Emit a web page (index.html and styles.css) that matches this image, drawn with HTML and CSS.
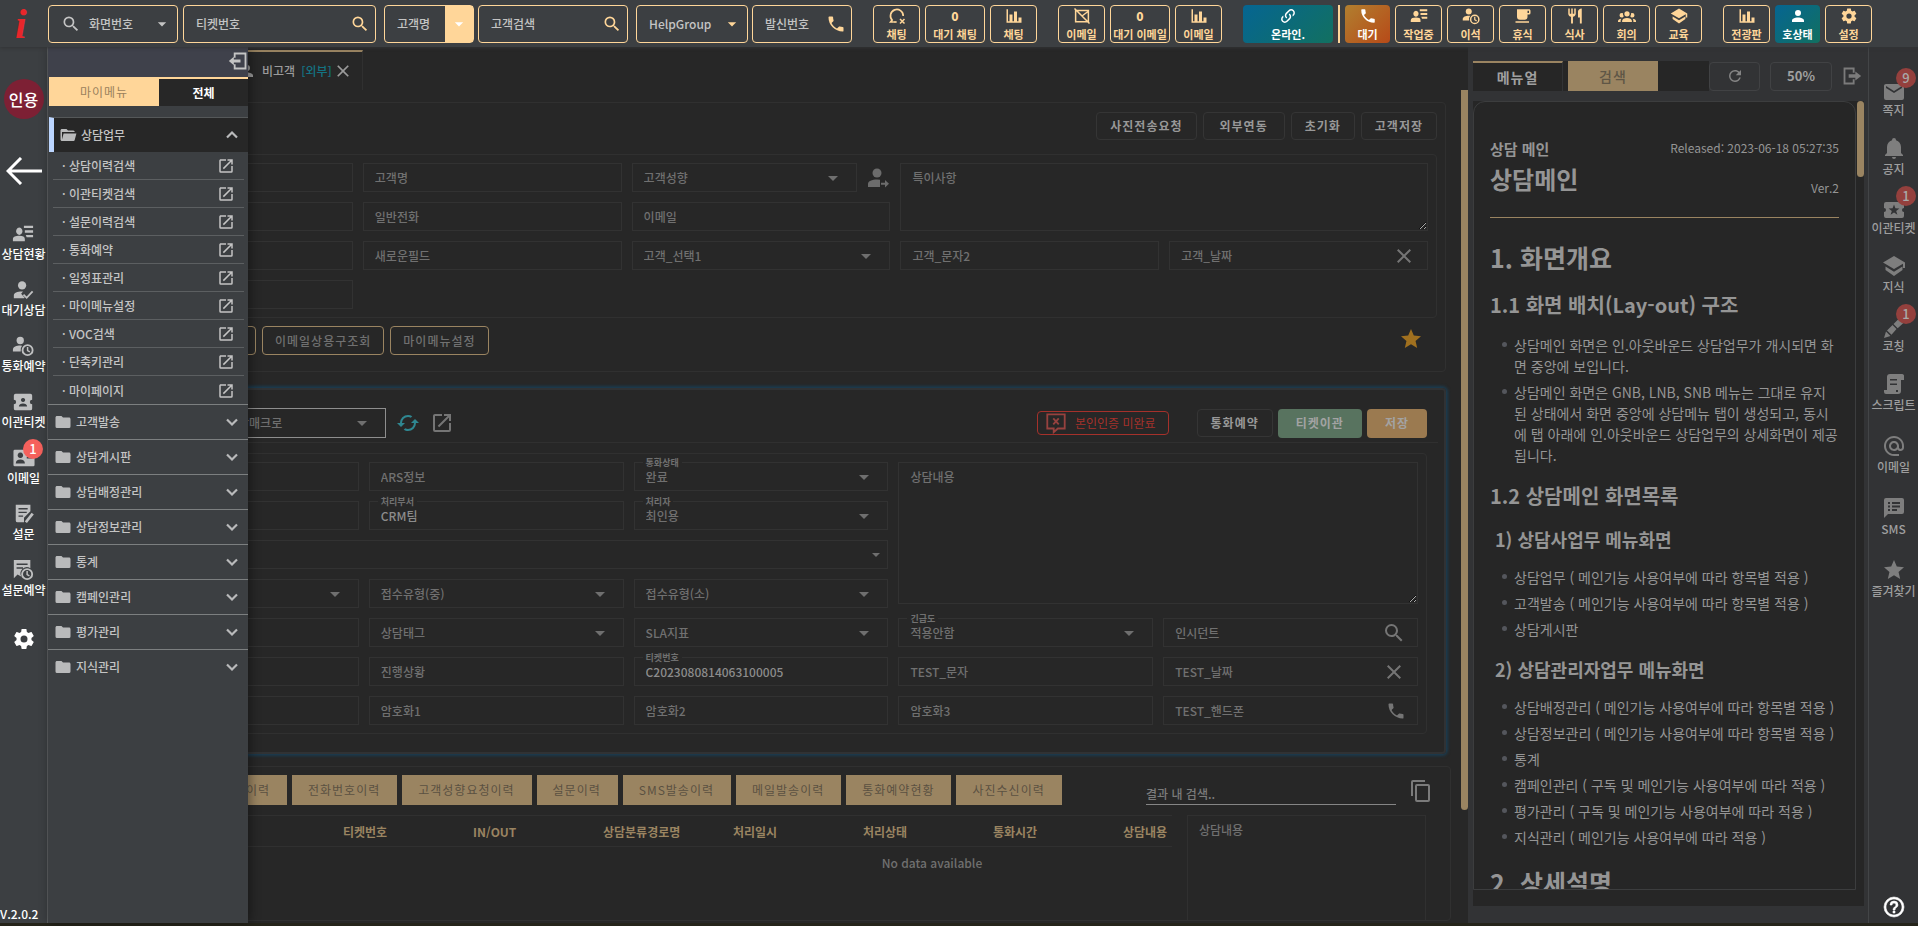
FILE: index.html
```html
<!DOCTYPE html>
<html lang="ko">
<head>
    <meta charset="UTF-8">
    <meta name="viewport" content="width=device-width, initial-scale=1.0">
    <title>상담메인</title>
    <link rel="stylesheet" href="styles.css">
</head>
<body>
    <!-- iconos -->
    <svg class="sprite" aria-hidden="true">
        <symbol id="magnify" viewBox="0 0 24 24"><path d="M9.5,3A6.5,6.5 0 0,1 16,9.5C16,11.11 15.41,12.59 14.44,13.73L14.71,14H15.5L20.5,19L19,20.5L14,15.5V14.71L13.73,14.44C12.59,15.41 11.11,16 9.5,16A6.5,6.5 0 0,1 3,9.5A6.5,6.5 0 0,1 9.5,3M9.5,5C7,5 5,7 5,9.5C5,12 7,14 9.5,14C12,14 14,12 14,9.5C14,7 12,5 9.5,5Z"/></symbol>
        <symbol id="down" viewBox="0 0 24 24"><path d="M7,10L12,15L17,10H7Z"/></symbol>
        <symbol id="phone" viewBox="0 0 24 24"><path d="M6.62,10.79C8.06,13.62 10.38,15.94 13.21,17.38L15.41,15.18C15.69,14.9 16.08,14.82 16.43,14.93C17.55,15.3 18.75,15.5 20,15.5A1,1 0 0,1 21,16.5V20A1,1 0 0,1 20,21A17,17 0 0,1 3,4A1,1 0 0,1 4,3H7.5A1,1 0 0,1 8.5,4C8.5,5.25 8.7,6.45 9.07,7.57C9.18,7.92 9.1,8.31 8.82,8.59L6.62,10.79Z"/></symbol>
        <symbol id="chart" viewBox="0 0 24 24"><path d="M22,21H2V3H4V19H6V10H10V19H12V6H16V19H18V14H22V21Z"/></symbol>
        <symbol id="chat-off" viewBox="0 0 24 24"><path d="M7,20H3.5L5.5,17.5A8.5,8.5 0 1,1 20.3,12" fill="none" stroke="currentColor" stroke-width="2.2"/><path d="M7,20H11.5" fill="none" stroke="currentColor" stroke-width="2.2"/><path d="M16,16L22,22M22,16L16,22" fill="none" stroke="currentColor" stroke-width="2"/></symbol>
        <symbol id="mail-off" viewBox="0 0 24 24"><path d="M3.5,4.5H20.5V19.5H3.5ZM12,12L20,6M2,2L22,22" fill="none" stroke="currentColor" stroke-width="2"/></symbol>
        <symbol id="link" viewBox="0 0 24 24"><path d="M10.59,13.41C11,13.8 11,14.44 10.59,14.83C10.2,15.22 9.56,15.22 9.17,14.83C7.22,12.88 7.22,9.71 9.17,7.76V7.76L12.71,4.22C14.66,2.27 17.83,2.27 19.78,4.22C21.73,6.17 21.73,9.34 19.78,11.29L18.29,12.78C18.3,11.96 18.17,11.14 17.89,10.36L18.36,9.88C19.54,8.71 19.54,6.81 18.36,5.64C17.19,4.46 15.29,4.46 14.12,5.64L10.59,9.17C9.41,10.34 9.41,12.24 10.59,13.41M13.41,9.17C13.8,8.78 14.44,8.78 14.83,9.17C16.78,11.12 16.78,14.29 14.83,16.24V16.24L11.29,19.78C9.34,21.73 6.17,21.73 4.22,19.78C2.27,17.83 2.27,14.66 4.22,12.71L5.71,11.22C5.7,12.04 5.83,12.86 6.11,13.65L5.64,14.12C4.46,15.29 4.46,17.19 5.64,18.36C6.81,19.54 8.71,19.54 9.88,18.36L13.41,14.83C14.59,13.66 14.59,11.76 13.41,10.59C13,10.2 13,9.56 13.41,9.17Z"/></symbol>
        <symbol id="user-list" viewBox="0 0 24 24"><path d="M8,5A3.5,4 0 1,1 7.9,5M1,20V17.5C1,15 4,14 8,14C12,14 14,15 14,17.5V20ZM13,3H23V5.5H13ZM14,8H23V10.5H14ZM15,13H23V15.5H16Z"/></symbol>
        <symbol id="user-clock" viewBox="0 0 24 24"><circle cx="9" cy="6" r="4"/><path d="M1,18V16C1,13 5,11.5 9,11.5L11,11.7A7,7 0 0,0 9.5,18Z"/><circle cx="17" cy="16.5" r="5.5" fill="none" stroke="currentColor" stroke-width="2"/><path d="M17,13V17L19.5,18.5" fill="none" stroke="currentColor" stroke-width="1.6"/></symbol>
        <symbol id="user-check" viewBox="0 0 24 24"><circle cx="11" cy="7" r="4.5"/><path d="M2,21V18C2,15 6,13.5 12,13.7L10,16L14,20.8L13,21Z"/><path d="M12.5,17L16,20.5L22.5,13.5" fill="none" stroke="currentColor" stroke-width="2"/></symbol>
        <symbol id="user-arrow" viewBox="0 0 24 24"><circle cx="11" cy="7" r="4.5"/><path d="M2,21V18C2,15 6,13.5 11,13.5L14,13.8V21ZM15,16.7H19V14L23,17.7L19,21.4V18.7H15Z"/></symbol>
        <symbol id="coffee" viewBox="0 0 24 24"><path d="M2,21H20V19H2M20,8H18V5H20M20,3H4V13A4,4 0 0,0 8,17H14A4,4 0 0,0 18,13V10H20A2,2 0 0,0 22,8V5C22,3.89 21.1,3 20,3Z"/></symbol>
        <symbol id="food" viewBox="0 0 24 24"><path d="M11,9H9V2H7V9H5V2H3V9C3,11.12 4.66,12.84 6.75,12.97V22H9.25V12.97C11.34,12.84 13,11.12 13,9V2H11V9M16,6V14H18.5V22H21V2C18.24,2 16,4.24 16,6Z"/></symbol>
        <symbol id="group" viewBox="0 0 24 24"><path d="M12,5.5A3.5,3.5 0 0,1 15.5,9A3.5,3.5 0 0,1 12,12.5A3.5,3.5 0 0,1 8.5,9A3.5,3.5 0 0,1 12,5.5M5,8C5.56,8 6.08,8.15 6.53,8.42C6.38,9.85 6.8,11.27 7.66,12.38C7.16,13.34 6.16,14 5,14A3,3 0 0,1 2,11A3,3 0 0,1 5,8M19,8A3,3 0 0,1 22,11A3,3 0 0,1 19,14C17.84,14 16.84,13.34 16.34,12.38C17.2,11.27 17.62,9.85 17.47,8.42C17.92,8.15 18.44,8 19,8M5.5,18.25C5.5,16.18 8.41,14.5 12,14.5C15.59,14.5 18.5,16.18 18.5,18.25V20H5.5V18.25M0,20V18.5C0,17.11 1.89,15.94 4.45,15.6C3.86,16.28 3.5,17.22 3.5,18.25V20H0M24,20H20.5V18.25C20.5,17.22 20.14,16.28 19.55,15.6C22.11,15.94 24,17.11 24,18.5V20Z"/></symbol>
        <symbol id="school" viewBox="0 0 24 24"><path d="M12,2L1,8.5L12,15L21,9.7V14H23V8.5M3.5,12.5V16L12,22L20.5,16V12.5L12,17.7Z"/></symbol>
        <symbol id="user" viewBox="0 0 24 24"><path d="M12,4A4,4 0 0,1 16,8A4,4 0 0,1 12,12A4,4 0 0,1 8,8A4,4 0 0,1 12,4M12,14C16.42,14 20,15.79 20,18V20H4V18C4,15.79 7.58,14 12,14Z"/></symbol>
        <symbol id="cog" viewBox="0 0 24 24"><path d="M12,15.5A3.5,3.5 0 0,1 8.5,12A3.5,3.5 0 0,1 12,8.5A3.5,3.5 0 0,1 15.5,12A3.5,3.5 0 0,1 12,15.5M19.43,12.97C19.47,12.65 19.5,12.33 19.5,12C19.5,11.67 19.47,11.34 19.43,11L21.54,9.37C21.73,9.22 21.78,8.95 21.66,8.73L19.66,5.27C19.54,5.05 19.27,4.96 19.05,5.05L16.56,6.05C16.04,5.66 15.5,5.32 14.87,5.07L14.5,2.42C14.46,2.18 14.25,2 14,2H10C9.75,2 9.54,2.18 9.5,2.42L9.13,5.07C8.5,5.32 7.96,5.66 7.44,6.05L4.95,5.05C4.73,4.96 4.46,5.05 4.34,5.27L2.34,8.73C2.21,8.95 2.27,9.22 2.46,9.37L4.57,11C4.53,11.34 4.5,11.67 4.5,12C4.5,12.33 4.53,12.65 4.57,12.97L2.46,14.63C2.27,14.78 2.21,15.05 2.34,15.27L4.34,18.73C4.46,18.95 4.73,19.03 4.95,18.95L7.44,17.94C7.96,18.34 8.5,18.68 9.13,18.93L9.5,21.58C9.54,21.82 9.75,22 10,22H14C14.25,22 14.46,21.82 14.5,21.58L14.87,18.93C15.5,18.67 16.04,18.34 16.56,17.94L19.05,18.95C19.27,19.03 19.54,18.95 19.66,18.73L21.66,15.27C21.78,15.05 21.73,14.78 21.54,14.63L19.43,12.97Z"/></symbol>
        <symbol id="open" viewBox="0 0 24 24"><path d="M14,3V5H17.59L7.76,14.83L9.17,16.24L19,6.41V10H21V3M19,19H5V5H12V3H5C3.89,3 3,3.9 3,5V19A2,2 0 0,0 5,21H19A2,2 0 0,0 21,19V12H19V19Z"/></symbol>
        <symbol id="chev-down" viewBox="0 0 24 24"><path d="M6,9L12,15L18,9" fill="none" stroke="currentColor" stroke-width="2.6"/></symbol>
        <symbol id="chev-up" viewBox="0 0 24 24"><path d="M6,15L12,9L18,15" fill="none" stroke="currentColor" stroke-width="2.6"/></symbol>
        <symbol id="folder" viewBox="0 0 24 24"><path d="M10,4H4C2.89,4 2,4.89 2,6V18A2,2 0 0,0 4,20H20A2,2 0 0,0 22,18V8C22,6.89 21.1,6 20,6H12L10,4Z"/></symbol>
        <symbol id="folder-open" viewBox="0 0 24 24"><path d="M19,20H4C2.89,20 2,19.1 2,18V6C2,4.89 2.89,4 4,4H10L12,6H19A2,2 0 0,1 21,8H21L4,8V18L6.14,10H23.21L20.93,18.5C20.7,19.37 19.92,20 19,20Z"/></symbol>
        <symbol id="close" viewBox="0 0 24 24"><path d="M19,6.41L17.59,5L12,10.59L6.41,5L5,6.41L10.59,12L5,17.59L6.41,19L12,13.41L17.59,19L19,17.59L13.41,12L19,6.41Z"/></symbol>
        <symbol id="star" viewBox="0 0 24 24"><path d="M12,17.27L18.18,21L16.54,13.97L22,9.24L14.81,8.62L12,2L9.19,8.62L2,9.24L7.45,13.97L5.82,21L12,17.27Z"/></symbol>
        <symbol id="cached" viewBox="0 0 24 24"><path d="M19,8L15,12H18A6,6 0 0,1 12,18C11,18 10.03,17.75 9.2,17.3L7.74,18.76C8.97,19.54 10.43,20 12,20A8,8 0 0,0 20,12H23M6,12A6,6 0 0,1 12,6C13,6 13.97,6.25 14.8,6.7L16.26,5.24C15.03,4.46 13.57,4 12,4A8,8 0 0,0 4,12H1L5,16L9,12"/></symbol>
        <symbol id="refresh" viewBox="0 0 24 24"><path d="M17.65,6.35C16.2,4.9 14.21,4 12,4A8,8 0 0,0 4,12A8,8 0 0,0 12,20C15.73,20 18.84,17.45 19.73,14H17.65C16.83,16.33 14.61,18 12,18A6,6 0 0,1 6,12A6,6 0 0,1 12,6C13.66,6 15.14,6.69 16.22,7.78L13,11H20V4L17.65,6.35Z"/></symbol>
        <symbol id="email" viewBox="0 0 24 24"><path d="M20,8L12,13L4,8V6L12,11L20,6M20,4H4C2.89,4 2,4.89 2,6V18A2,2 0 0,0 4,20H20A2,2 0 0,0 22,18V6C22,4.89 21.1,4 20,4Z"/></symbol>
        <symbol id="bell" viewBox="0 0 24 24"><path d="M21,19V20H3V19L5,17V11C5,7.9 7.03,5.17 10,4.29C10,4.19 10,4.1 10,4A2,2 0 0,1 12,2A2,2 0 0,1 14,4C14,4.1 14,4.19 14,4.29C16.97,5.17 19,7.9 19,11V17L21,19M14,21A2,2 0 0,1 12,23A2,2 0 0,1 10,21"/></symbol>
        <symbol id="ticket" viewBox="0 0 24 24"><path fill-rule="evenodd" d="M4,4H20A2,2 0 0,1 22,6V10A2,2 0 0,0 22,14V18A2,2 0 0,1 20,20H4A2,2 0 0,1 2,18V14A2,2 0 0,0 2,10V6A2,2 0 0,1 4,4M12,6.5L10.6,10.3L6.6,10.4L9.8,12.9L8.6,16.8L12,14.5L15.4,16.8L14.2,12.9L17.4,10.4L13.4,10.3Z"/></symbol>
        <symbol id="ticket-user" viewBox="0 0 24 24"><path fill-rule="evenodd" d="M4,3H20A2,2 0 0,1 22,5V9.5A2.5,2.5 0 0,0 22,14.5V19A2,2 0 0,1 20,21H4A2,2 0 0,1 2,19V14.5A2.5,2.5 0 0,0 2,9.5V5A2,2 0 0,1 4,3M12,7.5A2.3,2.3 0 1,0 12.1,7.5M7.5,17H16.5C16.5,14.5 14.5,13.5 12,13.5C9.5,13.5 7.5,14.5 7.5,17Z"/></symbol>
        <symbol id="card" viewBox="0 0 24 24"><path fill-rule="evenodd" d="M2,3H22A1.5,1.5 0 0,1 23.5,4.5V19.5A1.5,1.5 0 0,1 22,21H2A1.5,1.5 0 0,1 0.5,19.5V4.5A1.5,1.5 0 0,1 2,3M8,6A3,3 0 1,0 8.1,6M3,18H13C13,15 11,13.5 8,13.5C5,13.5 3,15 3,18ZM15,7V8.5H21V7ZM15,11V12.5H21V11Z"/></symbol>
        <symbol id="survey" viewBox="0 0 24 24"><path fill-rule="evenodd" d="M3,2H19V9L12,16V21H5A2,2 0 0,1 3,19ZM6,5.5V7H16V5.5ZM6,9.5V11H15V9.5ZM6,13.5V15H11V13.5Z"/><path d="M14,21L21.5,11.5" stroke="currentColor" stroke-width="3"/></symbol>
        <symbol id="survey-clock" viewBox="0 0 24 24"><path fill-rule="evenodd" d="M2,1H20V10A7,7 0 0,0 10,19L6,17L2,21ZM5,5V6.5H17V5ZM5,9V10.5H12V9Z"/><circle cx="16.5" cy="16.5" r="5.5" fill="none" stroke="currentColor" stroke-width="2"/><path d="M16.5,13V17L19,18.5" fill="none" stroke="currentColor" stroke-width="1.6"/></symbol>
        <symbol id="pen" viewBox="0 0 24 24"><path d="M2,22L4,15.5L8.5,20ZM5,14.5L10.5,9L14.5,13L9.5,18.8ZM11.5,8L18,1.5L22.5,6L15.7,12.2Z"/></symbol>
        <symbol id="script" viewBox="0 0 24 24"><path fill-rule="evenodd" d="M8,2H20A2.5,2.5 0 0,1 22,5V8H19V19A3,3 0 0,1 16,22H4A2,2 0 0,1 2,20V18H14V20H16V18H5V5A3,3 0 0,1 8,2M8,7V8.5H15V7ZM8,11.5V13H15V11.5Z"/></symbol>
        <symbol id="at" viewBox="0 0 24 24"><path d="M12,15C12.81,15 13.5,14.7 14.11,14.11C14.7,13.5 15,12.81 15,12C15,11.19 14.7,10.5 14.11,9.89C13.5,9.3 12.81,9 12,9C11.19,9 10.5,9.3 9.89,9.89C9.3,10.5 9,11.19 9,12C9,12.81 9.3,13.5 9.89,14.11C10.5,14.7 11.19,15 12,15M12,2C14.75,2 17.1,3 19.05,4.95C21,6.9 22,9.25 22,12V13.45C22,14.45 21.65,15.3 21,16C20.3,16.67 19.5,17 18.5,17C17.3,17 16.31,16.5 15.56,15.5C14.56,16.5 13.38,17 12,17C10.63,17 9.45,16.5 8.46,15.54C7.5,14.55 7,13.38 7,12C7,10.63 7.5,9.45 8.46,8.46C9.45,7.5 10.63,7 12,7C13.38,7 14.55,7.5 15.54,8.46C16.5,9.45 17,10.63 17,12V13.45C17,13.86 17.16,14.22 17.46,14.53C17.76,14.84 18.11,15 18.5,15C18.92,15 19.27,14.84 19.57,14.53C19.87,14.22 20,13.86 20,13.45V12C20,9.81 19.23,7.93 17.65,6.35C16.07,4.77 14.19,4 12,4C9.81,4 7.93,4.77 6.35,6.35C4.77,7.93 4,9.81 4,12C4,14.19 4.77,16.07 6.35,17.65C7.93,19.23 9.81,20 12,20H17V22H12C9.25,22 6.9,21 4.95,19.05C3,17.1 2,14.75 2,12C2,9.25 3,6.9 4.95,4.95C6.9,3 9.25,2 12,2Z"/></symbol>
        <symbol id="sms" viewBox="0 0 24 24"><path fill-rule="evenodd" d="M4,2H20A2,2 0 0,1 22,4V16A2,2 0 0,1 20,18H6L2,22V4A2,2 0 0,1 4,2M6,6V8H8V6ZM10,6V8H18V6ZM6,9.5V11.5H8V9.5ZM10,9.5V11.5H18V9.5ZM6,13V15H8V13ZM10,13V15H15V13Z"/></symbol>
        <symbol id="copy" viewBox="0 0 24 24"><path d="M19,21H8V7H19M19,5H8A2,2 0 0,0 6,7V21A2,2 0 0,0 8,23H19A2,2 0 0,0 21,21V7A2,2 0 0,0 19,5M16,1H4A2,2 0 0,0 2,3V17H4V3H16V1Z"/></symbol>
        <symbol id="help" viewBox="0 0 24 24"><path d="M11,18H13V16H11V18M12,2A10,10 0 0,0 2,12A10,10 0 0,0 12,22A10,10 0 0,0 22,12A10,10 0 0,0 12,2M12,20C7.59,20 4,16.41 4,12C4,7.59 7.59,4 12,4C16.41,4 20,7.59 20,12C20,16.41 16.41,20 12,20M12,6A4,4 0 0,0 8,10H10A2,2 0 0,1 12,8A2,2 0 0,1 14,10C14,12 11,11.75 11,15H13C13,12.75 16,12.5 16,10A4,4 0 0,0 12,6Z" stroke="currentColor" stroke-width="0.6"/></symbol>
        <symbol id="exit-left" viewBox="0 0 24 24"><path d="M8,8V3H21V21H8V16" fill="none" stroke="currentColor" stroke-width="2.2"/><path d="M1,12L7,7V10.3H15V13.7H7V17Z"/></symbol>
        <symbol id="exit-right" viewBox="0 0 24 24"><path d="M14,8V3H3V21H14V16" fill="none" stroke="currentColor" stroke-width="2.2"/><path d="M23,12L16,6.5V10H8V14H16V17.5Z"/></symbol>
        <symbol id="no-auth" viewBox="0 0 24 24"><path d="M2.5,2.5H21.5V18H14L9.5,22V18H2.5Z" fill="none" stroke="currentColor" stroke-width="2"/><path d="M9,7L15,13.5M15,7L9,13.5" stroke="currentColor" stroke-width="2"/></symbol>
        <symbol id="arrow" viewBox="0 0 36 28"><path d="M15,1L2,14L15,27M2,14H36" fill="none" stroke="currentColor" stroke-width="3"/></symbol>
    </svg>

    <header class="topbar">
        <div class="logo">i</div>
        <div class="search-groups">
            <div class="bar-group grow">
                <label class="bar-box screen">
                    <svg class="ico s20"><use href="#magnify"/></svg>
                    <select aria-label="화면번호"><option>화면번호</option></select>
                    <svg class="ico s20"><use href="#down"/></svg>
                </label>
                <label class="bar-box ticket">
                    <input type="text" placeholder="티켓번호" aria-label="티켓번호">
                    <svg class="ico s20 gold"><use href="#magnify"/></svg>
                </label>
            </div>
            <div class="bar-group tight">
                <label class="bar-box name">
                    <select aria-label="고객명"><option>고객명</option></select>
                    <span class="name-drop"><svg class="ico s20"><use href="#down"/></svg></span>
                </label>
                <label class="bar-box customer">
                    <input type="text" placeholder="고객검색" aria-label="고객검색">
                    <svg class="ico s20 gold"><use href="#magnify"/></svg>
                </label>
            </div>
            <div class="bar-group tight">
                <label class="bar-box help">
                    <select aria-label="HelpGroup"><option>HelpGroup</option></select>
                    <svg class="ico s20 gold"><use href="#down"/></svg>
                </label>
                <label class="bar-box call">
                    <input type="tel" placeholder="발신번호" aria-label="발신번호">
                    <svg class="ico s20 gold"><use href="#phone"/></svg>
                </label>
            </div>
        </div>
        <div class="bar-group">
            <button class="tool"><svg class="ico"><use href="#chat-off"/></svg>채팅</button>
            <button class="tool count"><b>0</b>대기 채팅</button>
            <button class="tool"><svg class="ico"><use href="#chart"/></svg>채팅</button>
        </div>
        <div class="bar-group">
            <button class="tool"><svg class="ico"><use href="#mail-off"/></svg>이메일</button>
            <button class="tool count"><b>0</b>대기 이메일</button>
            <button class="tool"><svg class="ico"><use href="#chart"/></svg>이메일</button>
        </div>
        <div class="bar-group">
            <button class="tool online"><svg class="ico"><use href="#link"/></svg>온라인.</button>
            <span class="bar-line"></span>
            <button class="tool ready"><svg class="ico"><use href="#phone"/></svg>대기</button>
            <button class="tool"><svg class="ico"><use href="#user-list"/></svg>작업중</button>
            <button class="tool"><svg class="ico"><use href="#user-clock"/></svg>이석</button>
            <button class="tool"><svg class="ico"><use href="#coffee"/></svg>휴식</button>
            <button class="tool"><svg class="ico"><use href="#food"/></svg>식사</button>
            <button class="tool"><svg class="ico"><use href="#group"/></svg>회의</button>
            <button class="tool"><svg class="ico"><use href="#school"/></svg>교육</button>
        </div>
        <div class="bar-group">
            <button class="tool"><svg class="ico"><use href="#chart"/></svg>전광판</button>
            <button class="tool state"><svg class="ico"><use href="#user"/></svg>호상태</button>
            <button class="tool"><svg class="ico"><use href="#cog"/></svg>설정</button>
        </div>
    </header>

    <div class="app">
        <nav class="rail">
            <div class="avatar">인용</div>
            <button class="back" aria-label="뒤로"><svg class="ico"><use href="#arrow"/></svg></button>
            <a href="#" class="rail-item"><svg class="ico"><use href="#user-list"/></svg>상담현황</a>
            <a href="#" class="rail-item"><svg class="ico"><use href="#user-check"/></svg>대기상담</a>
            <a href="#" class="rail-item"><svg class="ico"><use href="#user-clock"/></svg>통화예약</a>
            <a href="#" class="rail-item"><svg class="ico"><use href="#ticket-user"/></svg>이관티켓</a>
            <a href="#" class="rail-item"><svg class="ico"><use href="#card"/></svg>이메일<span class="badge">1</span></a>
            <a href="#" class="rail-item"><svg class="ico"><use href="#survey"/></svg>설문</a>
            <a href="#" class="rail-item"><svg class="ico"><use href="#survey-clock"/></svg>설문예약</a>
            <button class="rail-cog" aria-label="설정"><svg class="ico s24"><use href="#cog"/></svg></button>
            <span class="version">V.2.0.2</span>
        </nav>

        <main class="main">
            <div class="page-tabs">
                <div class="page-tab home"></div>
                <div class="page-tab active">
                    <svg class="ico"><use href="#user"/></svg>
                    <span>비고객</span>
                    <em>[외부]</em>
                    <button aria-label="탭 닫기"><svg class="ico s20"><use href="#close"/></svg></button>
                </div>
            </div>
            <div class="pane">
                <div class="content">
                    <!-- datos del cliente -->
                    <section class="panel">
                        <div class="panel-head">
                            <button class="btn">사진전송요청</button>
                            <button class="btn wide">외부연동</button>
                            <button class="btn">초기화</button>
                            <button class="btn">고객저장</button>
                        </div>
                        <div class="fields">
                            <div class="field"><input type="text" aria-label="고객번호"></div>
                            <div class="field"><input type="text" placeholder="고객명" aria-label="고객명"></div>
                            <div class="field-row">
                                <div class="field drop"><select aria-label="고객성향"><option>고객성향</option></select></div>
                                <svg class="ico s24"><use href="#user-arrow"/></svg>
                            </div>
                            <div class="field memo"><textarea placeholder="특이사항" aria-label="특이사항"></textarea></div>
                            <div class="field"><input type="text" aria-label="휴대전화"></div>
                            <div class="field"><input type="text" placeholder="일반전화" aria-label="일반전화"></div>
                            <div class="field"><input type="text" placeholder="이메일" aria-label="이메일"></div>
                            <div class="field"><input type="text" aria-label="주소"></div>
                            <div class="field"><input type="text" placeholder="새로운필드" aria-label="새로운필드"></div>
                            <div class="field drop"><select aria-label="고객_선택1"><option>고객_선택1</option></select></div>
                            <div class="field"><input type="text" placeholder="고객_문자2" aria-label="고객_문자2"></div>
                            <div class="field"><input type="text" placeholder="고객_날짜" aria-label="고객_날짜"><svg class="ico s24"><use href="#close"/></svg></div>
                            <div class="field"><input type="text" aria-label="기타"></div>
                        </div>
                        <div class="quick">
                            <button class="btn-line first-quick" aria-label="상용구"></button>
                            <button class="btn-line">이메일상용구조회</button>
                            <button class="btn-line">마이메뉴설정</button>
                            <svg class="ico s24 favorite"><use href="#star"/></svg>
                        </div>
                    </section>

                    <!-- ticket -->
                    <section class="panel ticket-panel">
                        <div class="ticket-head">
                            <div class="field drop macro"><select aria-label="상담매크로"><option>상담매크로</option></select></div>
                            <svg class="ico s24 teal"><use href="#cached"/></svg>
                            <svg class="ico s24"><use href="#open"/></svg>
                            <span class="no-auth"><svg class="ico s24"><use href="#no-auth"/></svg>본인인증 미완료</span>
                            <button class="btn">통화예약</button>
                            <button class="btn fill green">티켓이관</button>
                            <button class="btn fill orange">저장</button>
                        </div>
                        <div class="fields">
                            <div class="field"><input type="text" aria-label="채널"></div>
                            <div class="field"><input type="text" placeholder="ARS정보" aria-label="ARS정보"></div>
                            <div class="field drop"><label for="callState">통화상태</label><select id="callState"><option>완료</option></select></div>
                            <div class="field memo tall"><textarea placeholder="상담내용" aria-label="상담내용"></textarea></div>
                            <div class="field"><input type="text" aria-label="접수일시"></div>
                            <div class="field"><label for="dept">처리부서</label><input type="text" id="dept" value="CRM팀"></div>
                            <div class="field drop"><label for="worker">처리자</label><select id="worker"><option>최인용</option></select></div>
                            <div class="field drop path"><select aria-label="상담분류경로"><option></option></select></div>
                            <div class="field drop"><select aria-label="접수유형(대)"><option></option></select></div>
                            <div class="field drop"><select aria-label="접수유형(중)"><option>접수유형(중)</option></select></div>
                            <div class="field drop"><select aria-label="접수유형(소)"><option>접수유형(소)</option></select></div>
                            <div class="field"><input type="text" aria-label="제목"></div>
                            <div class="field drop"><select aria-label="상담태그"><option>상담태그</option></select></div>
                            <div class="field drop"><select aria-label="SLA지표"><option>SLA지표</option></select></div>
                            <div class="field drop"><label for="urgent">긴급도</label><select id="urgent"><option>적용안함</option></select></div>
                            <div class="field"><input type="text" placeholder="인시던트" aria-label="인시던트"><svg class="ico s24"><use href="#magnify"/></svg></div>
                            <div class="field"><input type="text" aria-label="진행"></div>
                            <div class="field"><input type="text" placeholder="진행상황" aria-label="진행상황"></div>
                            <div class="field"><label for="ticketNo">티켓번호</label><input type="text" id="ticketNo" value="C2023080814063100005"></div>
                            <div class="field"><input type="text" placeholder="TEST_문자" aria-label="TEST_문자"></div>
                            <div class="field"><input type="text" placeholder="TEST_날짜" aria-label="TEST_날짜"><svg class="ico s24"><use href="#close"/></svg></div>
                            <div class="field"><input type="text" aria-label="암호화"></div>
                            <div class="field"><input type="text" placeholder="암호화1" aria-label="암호화1"></div>
                            <div class="field"><input type="text" placeholder="암호화2" aria-label="암호화2"></div>
                            <div class="field"><input type="text" placeholder="암호화3" aria-label="암호화3"></div>
                            <div class="field phone"><input type="tel" placeholder="TEST_핸드폰" aria-label="TEST_핸드폰"><svg class="ico s20"><use href="#phone"/></svg></div>
                        </div>
                    </section>

                    <!-- historial -->
                    <section class="panel history">
                        <div class="history-head">
                            <button class="hist-tab first-tab">고객정보변경이력</button>
                            <button class="hist-tab">전화번호이력</button>
                            <button class="hist-tab">고객성향요청이력</button>
                            <button class="hist-tab">설문이력</button>
                            <button class="hist-tab">SMS발송이력</button>
                            <button class="hist-tab">메일발송이력</button>
                            <button class="hist-tab">통화예약현황</button>
                            <button class="hist-tab">사진수신이력</button>
                            <input type="text" class="hist-search" placeholder="결과 내 검색.." aria-label="결과 내 검색">
                            <svg class="ico s24"><use href="#copy"/></svg>
                        </div>
                        <div class="history-body">
                            <div class="table-wrap">
                                <table>
                                    <thead>
                                        <tr>
                                            <th class="first"></th>
                                            <th>티켓번호</th>
                                            <th>IN/OUT</th>
                                            <th>상담분류경로명</th>
                                            <th>처리일시</th>
                                            <th>처리상태</th>
                                            <th>통화시간</th>
                                            <th>상담내용</th>
                                            <th class="last"></th>
                                        </tr>
                                    </thead>
                                    <tbody>
                                        <tr><td colspan="9">No data available</td></tr>
                                    </tbody>
                                </table>
                            </div>
                            <textarea class="hist-memo" placeholder="상담내용" aria-label="상담내용"></textarea>
                        </div>
                    </section>
                </div>
                <div class="thumb"></div>
            </div>

            <aside class="drawer">
                <div class="drawer-head"><button aria-label="메뉴 닫기"><svg class="ico s20"><use href="#exit-left"/></svg></button></div>
                <div class="drawer-tabs">
                    <button>마이메뉴</button>
                    <button class="on">전체</button>
                </div>
                <button class="menu-open"><svg class="ico"><use href="#folder-open"/></svg><span>상담업무</span><svg class="ico s20"><use href="#chev-up"/></svg></button>
                <ul class="submenu">
                    <li><a href="#">· 상담이력검색<svg class="ico"><use href="#open"/></svg></a></li>
                    <li><a href="#">· 이관티켓검색<svg class="ico"><use href="#open"/></svg></a></li>
                    <li><a href="#">· 설문이력검색<svg class="ico"><use href="#open"/></svg></a></li>
                    <li><a href="#">· 통화예약<svg class="ico"><use href="#open"/></svg></a></li>
                    <li><a href="#">· 일정표관리<svg class="ico"><use href="#open"/></svg></a></li>
                    <li><a href="#">· 마이메뉴설정<svg class="ico"><use href="#open"/></svg></a></li>
                    <li><a href="#">· VOC검색<svg class="ico"><use href="#open"/></svg></a></li>
                    <li><a href="#">· 단축키관리<svg class="ico"><use href="#open"/></svg></a></li>
                    <li><a href="#">· 마이페이지<svg class="ico"><use href="#open"/></svg></a></li>
                </ul>
                <button class="menu"><svg class="ico"><use href="#folder"/></svg><span>고객발송</span><svg class="ico s20"><use href="#chev-down"/></svg></button>
                <button class="menu"><svg class="ico"><use href="#folder"/></svg><span>상담게시판</span><svg class="ico s20"><use href="#chev-down"/></svg></button>
                <button class="menu"><svg class="ico"><use href="#folder"/></svg><span>상담배정관리</span><svg class="ico s20"><use href="#chev-down"/></svg></button>
                <button class="menu"><svg class="ico"><use href="#folder"/></svg><span>상담정보관리</span><svg class="ico s20"><use href="#chev-down"/></svg></button>
                <button class="menu"><svg class="ico"><use href="#folder"/></svg><span>통계</span><svg class="ico s20"><use href="#chev-down"/></svg></button>
                <button class="menu"><svg class="ico"><use href="#folder"/></svg><span>캠페인관리</span><svg class="ico s20"><use href="#chev-down"/></svg></button>
                <button class="menu"><svg class="ico"><use href="#folder"/></svg><span>평가관리</span><svg class="ico s20"><use href="#chev-down"/></svg></button>
                <button class="menu"><svg class="ico"><use href="#folder"/></svg><span>지식관리</span><svg class="ico s20"><use href="#chev-down"/></svg></button>
            </aside>
        </main>

        <aside class="manual">
            <div class="manual-head">
                <div class="manual-tabs">
                    <button class="on">메뉴얼</button>
                    <button>검색</button>
                </div>
                <button class="box-btn" aria-label="새로고침"><svg class="ico"><use href="#refresh"/></svg></button>
                <button class="box-btn zoom">50%</button>
                <svg class="ico s20"><use href="#exit-right"/></svg>
            </div>
            <div class="doc-area">
                <article class="doc">
                    <header>
                        <span class="doc-sub">상담 메인</span>
                        <span class="released">Released: 2023-06-18 05:27:35</span>
                        <span class="doc-title">상담메인</span>
                        <span class="ver">Ver.2</span>
                    </header>
                    <h1>1. 화면개요</h1>
                    <h2>1.1 화면 배치(Lay-out) 구조</h2>
                    <ul>
                        <li>상담메인 화면은 인.아웃바운드 상담업무가 개시되면 화면 중앙에 보입니다.</li>
                        <li>상담메인 화면은 GNB, LNB, SNB 메뉴는 그대로 유지된 상태에서 화면 중앙에 상담메뉴 탭이 생성되고, 동시에 탭 아래에 인.아웃바운드 상담업무의 상세화면이 제공됩니다.</li>
                    </ul>
                    <h2>1.2 상담메인 화면목록</h2>
                    <h3>1) 상담사업무 메뉴화면</h3>
                    <ul>
                        <li>상담업무 ( 메인기능 사용여부에 따라 항목별 적용 )</li>
                        <li>고객발송 ( 메인기능 사용여부에 따라 항목별 적용 )</li>
                        <li>상담게시판</li>
                    </ul>
                    <h3>2) 상담관리자업무 메뉴화면</h3>
                    <ul>
                        <li>상담배정관리 ( 메인기능 사용여부에 따라 항목별 적용 )</li>
                        <li>상담정보관리 ( 메인기능 사용여부에 따라 항목별 적용 )</li>
                        <li>통계</li>
                        <li>캠페인관리 ( 구독 및 메인기능 사용여부에 따라 적용 )</li>
                        <li>평가관리 ( 구독 및 메인기능 사용여부에 따라 적용 )</li>
                        <li>지식관리 ( 메인기능 사용여부에 따라 적용 )</li>
                    </ul>
                    <h1>2. 상세설명</h1>
                </article>
                <div class="doc-thumb"></div>
            </div>
        </aside>

        <nav class="side">
            <a href="#" class="side-item near"><svg class="ico"><use href="#email"/></svg>쪽지<span class="badge">9</span></a>
            <a href="#" class="side-item"><svg class="ico"><use href="#bell"/></svg>공지</a>
            <a href="#" class="side-item near"><svg class="ico"><use href="#ticket"/></svg>이관티켓<span class="badge">1</span></a>
            <a href="#" class="side-item"><svg class="ico"><use href="#school"/></svg>지식</a>
            <a href="#" class="side-item near"><svg class="ico"><use href="#pen"/></svg>코칭<span class="badge">1</span></a>
            <a href="#" class="side-item"><svg class="ico"><use href="#script"/></svg>스크립트</a>
            <a href="#" class="side-item far"><svg class="ico"><use href="#at"/></svg>이메일</a>
            <a href="#" class="side-item far"><svg class="ico"><use href="#sms"/></svg>SMS</a>
            <a href="#" class="side-item far"><svg class="ico"><use href="#star"/></svg>즐겨찾기</a>
            <button class="side-help" aria-label="도움말"><svg class="ico s24"><use href="#help"/></svg></button>
        </nav>
    </div>
</body>
</html>
```

FILE: styles.css
```css
*{
    box-sizing: border-box;
}
body{
    margin: 0;
    height: 100vh;
    display: flex;
    flex-direction: column;
    background: #272727;
    color: #c4c4c4;
    font-family: "Noto Sans CJK KR", "Noto Sans", sans-serif;
    font-size: 12px;
    font-weight: 500;
    line-height: 18px;
    overflow: hidden;
}
button, input, select, textarea{
    font: inherit;
    color: inherit;
    background: none;
    border: 0;
    padding: 0;
    margin: 0;
    outline: 0;
    min-width: 0;
}
button{
    white-space: nowrap;
}
select{
    appearance: none;
}
input::placeholder, textarea::placeholder{
    color: inherit;
    opacity: 1;
}
a{
    color: inherit;
    text-decoration: none;
}
ul{
    list-style: none;
    margin: 0;
    padding: 0;
}
.sprite{
    display: none;
}
.ico{
    width: 18px;
    height: 18px;
    fill: currentColor;
    flex: none;
}
.s20{
    width: 20px;
    height: 20px;
}
.s24{
    width: 24px;
    height: 24px;
}
.gold{
    color: #ffd699;
}

/* barra superior */
.topbar{
    display: flex;
    align-items: center;
    gap: 21px;
    height: 47px;
    flex: none;
    padding-right: 46px;
    background: #3c3f42;
    box-shadow: 0 1px 3px #323436;
    z-index: 2;
}
.logo{
    width: 27px;
    padding-left: 15px;
    color: #e8262b;
    font-family: "Liberation Serif", serif;
    font-style: italic;
    font-weight: bold;
    font-size: 42px;
    line-height: 38px;
}
.search-groups{
    display: flex;
    gap: 8px;
    flex: 1;
}
.bar-group{
    display: flex;
    gap: 5px;
}
.tight{
    gap: 4px;
}
.grow{
    flex: 1;
}
.bar-box{
    display: flex;
    align-items: center;
    height: 38px;
    border: 1px solid #ffd699;
    border-radius: 4px;
    padding: 0 5px 0 12px;
}
.bar-box select, .bar-box input{
    flex: 1;
}
.screen{
    width: 130px;
    gap: 8px;
}
.ticket{
    flex: 1;
}
.name{
    width: 90px;
    padding-right: 0;
}
.name-drop{
    display: flex;
    align-items: center;
    justify-content: center;
    width: 28px;
    height: 36px;
    background: #ffd699;
    color: #fff;
}
.customer{
    width: 150px;
}
.help{
    width: 112px;
}
.call{
    width: 100px;
}
.tool{
    display: flex;
    flex-direction: column;
    align-items: center;
    width: 47px;
    height: 38px;
    border: 1px solid #ffd699;
    border-radius: 4px;
    color: #ffd699;
    font-size: 11px;
    font-weight: 700;
    line-height: 16px;
}
.tool b{
    font-size: 12px;
    line-height: 20px;
}
.tool .ico{
    margin: 1px 0;
}
.count{
    width: 60px;
}
.online, .state, .ready{
    width: 45px;
    padding-top: 1px;
    border: 0;
    color: #fff;
    background: linear-gradient(135deg, #056592, #127060);
}
.online{
    width: 90px;
}
.ready{
    background: linear-gradient(135deg, #b17f2f, #b74a18);
}
.bar-line{
    width: 2px;
    background: #ffd699;
}

.app{
    display: flex;
    flex: 1;
    min-height: 0;
    border-bottom: 3px solid #25241a;
}

/* menu izquierdo */
.rail{
    display: flex;
    flex-direction: column;
    align-items: center;
    width: 48px;
    flex: none;
    padding-top: 32px;
    background: #3c3f42;
    border-right: 1px solid #5c5f61;
    color: #fff;
}
.avatar{
    width: 40px;
    height: 40px;
    border-radius: 50%;
    background: #7d2034;
    font-size: 16px;
    line-height: 40px;
    text-align: center;
}
.back{
    margin: 38px 0;
}
.back .ico{
    display: block;
    width: 36px;
    height: 28px;
}
.rail-item{
    position: relative;
    display: flex;
    flex-direction: column;
    align-items: center;
    height: 56px;
    white-space: nowrap;
}
.rail-item .ico{
    width: 22px;
    height: 22px;
    color: #bfc0c1;
}
.badge{
    position: absolute;
    top: -8px;
    right: -3px;
    width: 20px;
    height: 20px;
    border-radius: 50%;
    background: #f5615c;
    color: #fff;
    line-height: 20px;
    text-align: center;
    font-size: 13px;
}
.rail-cog{
    margin-top: 12px;
}
.version{
    margin-top: auto;
    align-self: flex-start;
}

/* zona central */
.main{
    position: relative;
    display: flex;
    flex-direction: column;
    flex: 1;
    min-width: 0;
    padding-top: 3px;
}
.page-tabs{
    display: flex;
    height: 40px;
    flex: none;
}
.page-tab{
    display: flex;
    align-items: center;
    gap: 6px;
    border-top: 2px solid #9a8461;
    border-right: 1px solid #303030;
    padding-right: 9px;
    color: #9b9b9b;
}
.page-tab button{
    margin-left: -5px;
}
.page-tab .s20{
    display: block;
}
.home{
    width: 190px;
}
.page-tab em{
    font-style: normal;
    color: #147383;
}
.pane{
    display: flex;
    flex: 1;
    min-height: 0;
    overflow: hidden;
}
.content{
    flex: 1;
    min-width: 0;
    padding: 12px 15px 0 28px;
    color: #707070;
}
.thumb{
    width: 7px;
    height: 720px;
    background: #9a8461;
    border-radius: 0 0 4px 4px;
}
.panel{
    border: 1px solid #303030;
    border-radius: 4px;
    padding: 0 8px 16px;
}
.panel-head{
    display: flex;
    justify-content: flex-end;
    align-items: center;
    gap: 6px;
    height: 45px;
    margin-bottom: 6px;
}
.btn{
    height: 28px;
    padding: 0 13px;
    border: 1px solid #353535;
    border-radius: 4px;
    color: #989898;
    font-weight: 700;
    letter-spacing: 1px;
}
.wide{
    padding: 0 16px;
}
.fields{
    display: grid;
    grid-template-columns: repeat(5, 1fr);
    grid-auto-rows: 29px;
    gap: 10px;
    padding: 8px;
    border: 1px solid #303030;
    border-radius: 4px;
}
.field{
    position: relative;
    flex: 1;
    min-width: 0;
    border: 1px solid #323232;
}
.field input, .field select, .field textarea{
    display: block;
    width: 100%;
    height: 100%;
    padding: 0 11px;
}
.field textarea{
    padding-top: 5px;
}
.field label{
    position: absolute;
    left: 8px;
    top: -8px;
    padding: 0 3px;
    background: #272727;
    font-size: 9px;
    font-weight: 700;
    line-height: 16px;
}
.field input:not(:placeholder-shown){
    color: #8c8c8c;
}
.drop::after{
    content: "";
    position: absolute;
    right: 18px;
    top: 12px;
    border: 5px solid transparent;
    border-top-color: #6f6f6f;
    border-bottom: 0;
}
.field .ico{
    position: absolute;
    right: 11px;
    top: 2px;
    color: #757575;
}
.phone .ico{
    top: 4px;
}
.field-row{
    display: flex;
    align-items: center;
    gap: 9px;
}
.field-row .field{
    height: 29px;
}
.field-row .ico{
    color: #6c6c6c;
}
.memo{
    grid-column: 4 / 6;
    grid-row: 1 / 3;
}
.tall{
    grid-row: 1 / 5;
    margin-bottom: 4px;
}
.path{
    grid-column: 1 / 4;
}
.path::after{
    right: 7px;
    border-width: 4px;
    border-bottom: 0;
}
.quick{
    display: flex;
    align-items: center;
    gap: 6px;
    margin-top: 8px;
}
.btn-line{
    height: 29px;
    padding: 0 12px;
    border: 1px solid #9a8461;
    border-radius: 4px;
    letter-spacing: 1px;
}
.first-quick{
    width: 171px;
}
.favorite{
    margin: 0 14px 4px auto;
    color: #a0701f;
}
.ticket-panel{
    margin-top: 16px;
    padding: 18px 6px 18px;
    border: 2px solid #303234;
    box-shadow: 0 0 3px 2px #1b3c50;
}
.ticket-head{
    display: flex;
    align-items: center;
    gap: 5px;
    padding: 0 11px 4px 0;
    margin-bottom: 10px;
    border-bottom: 1px solid #303030;
}
.ticket-head .s24{
    margin-left: 5px;
    color: #757575;
}
.ticket-head .teal{
    color: #2f8791;
}
.macro{
    flex: none;
    width: 171px;
    height: 30px;
    margin-left: 131px;
    border-color: #8e8e8e;
}
.no-auth{
    display: flex;
    align-items: center;
    gap: 8px;
    height: 24px;
    margin: 0 23px 0 auto;
    padding-right: 12px;
    border: 1px solid #a5312b;
    border-radius: 4px;
    color: #a5312b;
    font-weight: 400;
}
.ticket-head .no-auth .ico{
    width: 22px;
    height: 22px;
    margin-left: 7px;
    color: #96423f;
}
.fill{
    height: 29px;
    padding: 0 18px;
    border: 0;
    background: #58735f;
    color: #a3a3a3;
}
.orange{
    background: #9b7a50;
}
.ticket-panel .fields{
    margin: 0 11px;
}
.history{
    margin: 12px -5px 0 0;
    padding: 8px 8px 0;
}
.history-head{
    display: flex;
    gap: 5px;
}
.hist-tab{
    height: 30px;
    padding: 0 17px 0 16px;
    background: #9a8461;
    color: #5a5141;
    font-weight: 400;
    letter-spacing: 1px;
}
.first-tab{
    width: 202px;
    text-align: right;
}
.hist-search{
    width: 250px;
    margin-left: auto;
    padding-top: 8px;
    border-bottom: 1px solid #858585;
    color: #7b7b7b;
}
.history-head .ico{
    margin: 4px 9px 0 8px;
    color: #7b7b7b;
}
.history-body{
    display: flex;
    gap: 15px;
    margin-top: 10px;
    padding-right: 16px;
    height: 105px;
}
.table-wrap{
    flex: 1;
    overflow: hidden;
}
table{
    width: 1694px;
    table-layout: fixed;
    border-collapse: collapse;
    border-top: 1px solid #303030;
}
th{
    width: 130px;
    height: 31px;
    padding: 2px 0 0 15px;
    border-bottom: 1px solid #303030;
    text-align: left;
    color: #9a8461;
    font-weight: 700;
}
.first{
    width: 243px;
}
.last{
    width: auto;
}
td{
    padding: 7px 0;
    text-align: center;
}
.hist-memo{
    width: 239px;
    padding: 5px 11px;
    border: 1px solid #303030;
    border-bottom: 0;
    resize: none;
}

/* menu desplegado */
.drawer{
    position: absolute;
    left: 0;
    top: 0;
    bottom: 0;
    width: 200px;
    display: flex;
    flex-direction: column;
    background: #3c3f42;
    box-shadow: 2px 0 10px rgba(0, 0, 0, 0.4);
}
.drawer-head{
    height: 30px;
    padding: 4px 0 0;
    background: #3f414b;
    text-align: right;
}
.drawer-tabs{
    display: flex;
    height: 29px;
    margin-bottom: 11px;
    padding-left: 1px;
}
.drawer-tabs button{
    width: 110px;
    background: #ffd699;
    color: #9a815c;
    font-weight: 400;
    letter-spacing: 1px;
}
.drawer-tabs .on{
    flex: 1;
    border-top: 2px solid #ffd699;
    background: #272727;
    color: #fff;
    font-weight: 700;
    letter-spacing: normal;
}
.menu-open, .menu{
    display: flex;
    align-items: center;
    height: 35px;
    gap: 4px;
    padding: 0 6px;
    text-align: left;
}
.menu-open{
    margin-left: 1px;
    padding-left: 5px;
    border-left: 5px solid #bcd6ff;
    border-top: 1px solid #555859;
    background: #272727;
}
.menu-open .ico, .menu .ico{
    color: #b9babb;
}
.menu-open span, .menu span{
    flex: 1;
}
.submenu a{
    display: flex;
    justify-content: space-between;
    align-items: center;
    height: 28px;
    margin: 0 4px 0 5px;
    padding: 1px 9px 0;
    border-bottom: 1px solid #5c5f61;
}
.submenu li:last-child a{
    border-bottom: 0;
}
.menu{
    border-top: 1px solid #7c7f80;
}

/* manual */
.manual{
    width: 400px;
    flex: none;
    padding: 14px 4px 0 5px;
    background: #323335;
    color: #959595;
    font-size: 14px;
}
.manual-head{
    display: flex;
    align-items: center;
    height: 30px;
}
.manual-tabs{
    display: flex;
    width: 236px;
    height: 30px;
    gap: 5px;
    background: #262626;
}
.manual-tabs button{
    width: 90px;
    background: #9a8461;
    color: #5f5646;
    letter-spacing: 1px;
}
.manual-tabs .on{
    border-top: 2px solid #9a8461;
    border-right: 1px solid #323335;
    background: #262626;
    color: #a0a0a0;
    font-weight: 700;
}
.box-btn{
    display: flex;
    align-items: center;
    justify-content: center;
    width: 51px;
    height: 29px;
    margin-right: 10px;
    border: 1px solid #414244;
    border-radius: 4px;
    color: #858585;
}
.manual-head .zoom{
    width: 62px;
    color: #a0a0a0;
    font-weight: 700;
    font-size: 13px;
}
.manual-head .s20{
    color: #7b7b7b;
}
.doc-area{
    display: flex;
    gap: 1px;
    height: 805px;
    margin-top: 10px;
    padding-bottom: 16px;
    background: #262626;
}
.doc{
    flex: 1;
    padding: 35px 16px 0;
    border: 1px solid #3c3d3e;
    border-radius: 12px 12px 0 0;
    overflow: hidden;
    line-height: 21px;
    font-weight: 400;
}
.doc header{
    display: grid;
    grid-template-columns: auto auto;
    grid-template-rows: 24px 30px;
    row-gap: 3px;
    padding-bottom: 23px;
    margin-bottom: 23px;
    border-bottom: 1px solid #9a8461;
}
.doc .released, .doc .ver{
    font-size: 12px;
    text-align: right;
}
.doc .doc-sub{
    font-size: 15px;
    font-weight: 700;
    line-height: 24px;
}
.doc .doc-title{
    font-size: 24px;
    font-weight: 700;
    line-height: 30px;
}
.doc .ver{
    align-self: end;
    line-height: 12px;
}
.doc h1{
    margin: 18px 0;
    font-size: 25px;
    line-height: 32px;
}
.doc h2{
    margin: 16px 0;
    font-size: 20px;
    line-height: 28px;
}
.doc h3{
    margin: 16px 5px 15px;
    font-size: 18px;
    line-height: 26px;
}
.doc li{
    position: relative;
    margin-bottom: 5px;
    padding: 0 1px 0 24px;
    word-break: break-all;
}
.doc li:last-child{
    margin-bottom: 0;
}
.doc li::before{
    content: "";
    position: absolute;
    left: 12px;
    top: 7px;
    width: 5px;
    height: 5px;
    border-radius: 50%;
    background: #54565c;
}
.doc-thumb{
    width: 7px;
    height: 76px;
    border-radius: 4px;
    background: #9a8461;
}

/* menu derecho */
.side{
    display: flex;
    flex-direction: column;
    align-items: center;
    width: 50px;
    flex: none;
    padding-top: 32px;
    background: #323335;
    border-left: 1px solid #434547;
    color: #9e9e9e;
}
.side-item{
    position: relative;
    display: flex;
    flex-direction: column;
    align-items: center;
    justify-content: flex-end;
    width: 49px;
    height: 59px;
    white-space: nowrap;
}
.side-item:first-child{
    height: 40px;
}
.side-item .ico{
    width: 24px;
    height: 24px;
    color: #7e7e7e;
}
.near .ico{
    margin-bottom: -3px;
}
.far{
    height: 62px;
}
.side .badge{
    top: auto;
    right: 2px;
    bottom: 31px;
    background: #94403d;
    color: #a8a8a8;
}
.side-help{
    margin-top: auto;
    color: #fff;
}
```
